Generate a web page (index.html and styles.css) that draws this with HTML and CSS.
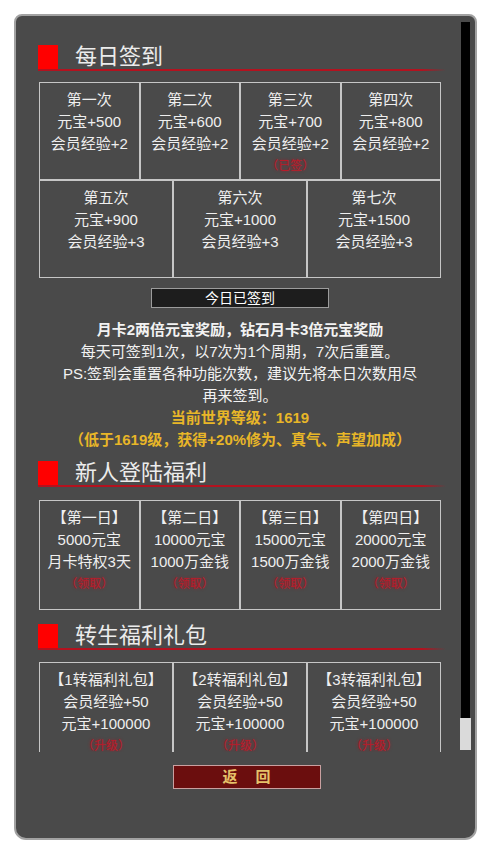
FILE: index.html
```html
<!DOCTYPE html>
<html lang="zh-CN">
<head>
<meta charset="utf-8">
<title>每日签到</title>
<link rel="stylesheet" href="styles.css">
</head>
<body>
<div class="panel">
  <div class="main">
    <div class="scroll">
      <div class="sec-head h1"><span class="mark"></span><span class="title">每日签到</span></div>
      <div class="grid g1">
        <div class="row">
          <div class="cell"><div>第一次</div><div>元宝+500</div><div>会员经验+2</div></div>
          <div class="cell"><div>第二次</div><div>元宝+600</div><div>会员经验+2</div></div>
          <div class="cell"><div>第三次</div><div>元宝+700</div><div>会员经验+2</div><div class="red">（已签）</div></div>
          <div class="cell"><div>第四次</div><div>元宝+800</div><div>会员经验+2</div></div>
        </div>
        <div class="row">
          <div class="cell"><div>第五次</div><div>元宝+900</div><div>会员经验+3</div></div>
          <div class="cell"><div>第六次</div><div>元宝+1000</div><div>会员经验+3</div></div>
          <div class="cell"><div>第七次</div><div>元宝+1500</div><div>会员经验+3</div></div>
        </div>
      </div>
      <div class="signed">今日已签到</div>
      <div class="notes">
        <div class="bold">月卡2两倍元宝奖励，钻石月卡3倍元宝奖励</div>
        <div>每天可签到1次，以7次为1个周期，7次后重置。</div>
        <div>PS:签到会重置各种功能次数，建议先将本日次数用尽</div>
        <div>再来签到。</div>
        <div class="gold">当前世界等级：1619</div>
        <div class="gold">（低于1619级，获得+20%修为、真气、声望加成）</div>
      </div>
      <div class="sec-head h2"><span class="mark"></span><span class="title">新人登陆福利</span></div>
      <div class="grid g2">
        <div class="row">
          <div class="cell"><div>【第一日】</div><div>5000元宝</div><div>月卡特权3天</div><div class="red">（领取）</div></div>
          <div class="cell"><div>【第二日】</div><div>10000元宝</div><div>1000万金钱</div><div class="red">（领取）</div></div>
          <div class="cell"><div>【第三日】</div><div>15000元宝</div><div>1500万金钱</div><div class="red">（领取）</div></div>
          <div class="cell"><div>【第四日】</div><div>20000元宝</div><div>2000万金钱</div><div class="red">（领取）</div></div>
        </div>
      </div>
      <div class="sec-head h3"><span class="mark"></span><span class="title">转生福利礼包</span></div>
      <div class="grid g3">
        <div class="row">
          <div class="cell"><div>【1转福利礼包】</div><div>会员经验+50</div><div>元宝+100000</div><div class="red">（升级）</div></div>
          <div class="cell"><div>【2转福利礼包】</div><div>会员经验+50</div><div>元宝+100000</div><div class="red">（升级）</div></div>
          <div class="cell"><div>【3转福利礼包】</div><div>会员经验+50</div><div>元宝+100000</div><div class="red">（升级）</div></div>
        </div>
      </div>
    </div>
    <div class="scrollbar"><div class="track"></div><div class="thumb"></div></div>
  </div>
  <div class="footer"><div class="back">返 回</div></div>
</div>
</body>
</html>
```

FILE: styles.css
```css
html, body {
  margin: 0;
  padding: 0;
  background: #ffffff;
}
body {
  font-family: "Liberation Sans", "Noto Sans CJK SC", sans-serif;
}
.panel {
  box-sizing: border-box;
  margin: 14px 0 0 14px;
  width: 463px;
  height: 826px;
  border: 2px solid #a2a2a2;
  border-radius: 8px 8px 12px 12px;
  background: #4a4a4a;
  color: #eeeeee;
}
.main {
  display: flex;
  padding-top: 6px;
}
.scroll {
  box-sizing: border-box;
  width: 444px;
  height: 730px;
  overflow: hidden;
  padding: 0 19px 0 23px;
}
.scrollbar {
  width: 11px;
  display: flex;
  flex-direction: column;
  align-items: center;
}
.track {
  width: 9px;
  height: 696px;
  background: #000000;
}
.thumb {
  width: 11px;
  height: 32px;
  background: #dadada;
}
.sec-head {
  display: flex;
  align-items: center;
  margin-left: -1px;
  margin-right: -5px;
  padding-bottom: 2px;
  background: linear-gradient(to right, #b3121f 0%, #b3121f 94%, rgba(179, 18, 31, 0) 100%) left bottom / 100% 2px no-repeat;
}
.sec-head .mark {
  width: 20px;
  height: 24px;
  background: #ff0000;
}
.sec-head .title {
  margin-left: 17px;
  font-size: 22px;
  line-height: 24px;
  color: #ececec;
}
.h1 { margin-top: 23px; }
.h2 { margin-top: 10px; }
.h3 { margin-top: 14px; }
.g1 { margin-top: 11px; }
.g2 { margin-top: 13px; }
.g3 { margin-top: 12px; }
.row {
  display: flex;
}
.cell {
  box-sizing: border-box;
  flex: 1 1 0;
  border: 1px solid #c6c6c6;
  padding-top: 6px;
  text-align: center;
  font-size: 15px;
  line-height: 22px;
  color: #efefef;
}
.g1 .cell { height: 98px; }
.g2 .cell { height: 110px; }
.g3 .cell { height: 110px; }
.cell .red {
  font-size: 12px;
  color: #b81c2a;
  text-shadow: 0 0 3px rgba(200, 10, 30, 0.7);
}
.signed {
  box-sizing: border-box;
  width: 178px;
  height: 20px;
  margin: 10px auto 0;
  border: 1px solid #9c9c9c;
  background: #1d1d1d;
  color: #ffffff;
  font-size: 14px;
  line-height: 18px;
  text-align: center;
}
.notes {
  margin-top: 11px;
  text-align: center;
  font-size: 15px;
  line-height: 22px;
  color: #f2f2f2;
}
.notes .bold {
  font-weight: bold;
}
.notes .gold {
  font-weight: bold;
  color: #e8b628;
}
.footer {
  display: flex;
  justify-content: center;
  padding: 13px 0 0 2px;
}
.back {
  box-sizing: border-box;
  width: 148px;
  height: 24px;
  border: 1px solid #c9a0a0;
  background: #6b0e0e;
  color: #e6c26a;
  font-size: 15px;
  font-weight: bold;
  line-height: 22px;
  text-align: center;
  word-spacing: 14px;
}
```
